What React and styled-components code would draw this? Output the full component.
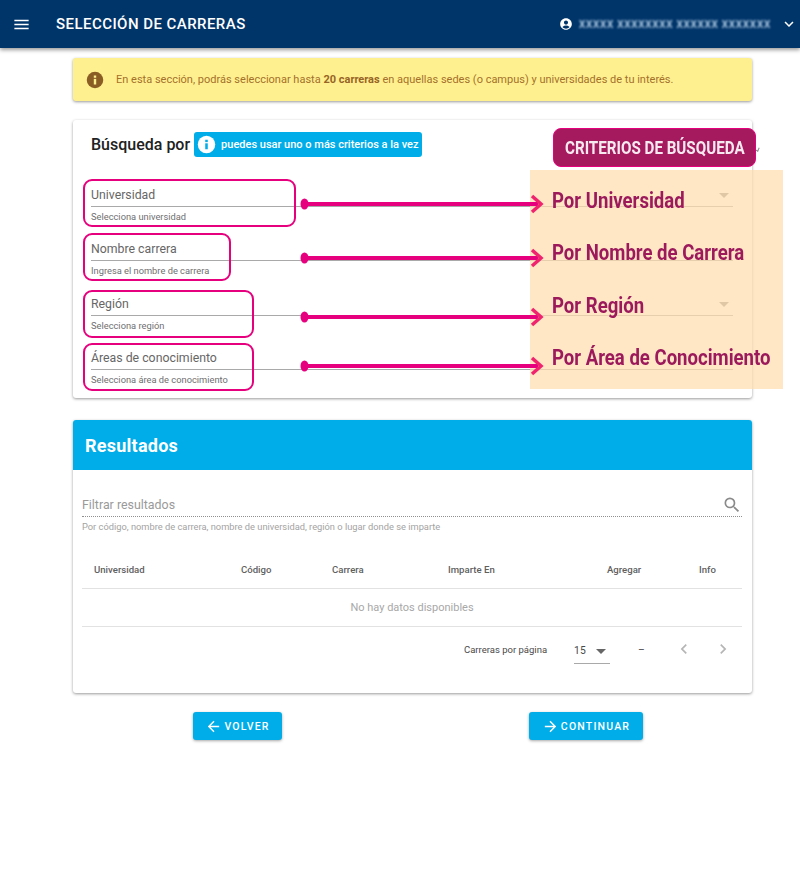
import React from "react";
import styled, { createGlobalStyle } from "styled-components";
import {
  MdMenu,
  MdKeyboardArrowDown,
  MdSearch,
  MdChevronLeft,
  MdChevronRight,
  MdArrowBack,
  MdArrowForward,
  MdAccountCircle,
} from "react-icons/md";

const GlobalStyle = createGlobalStyle`
  html, body { margin: 0; padding: 0; background: #fff; }
  body { font-family: Roboto, "Liberation Sans", sans-serif; width: 800px; min-height: 885px; overflow-x: hidden; }
  * { box-sizing: border-box; }
`;

const TopBar = styled.header`
  height: 48px;
  background: #00356a;
  color: #fff;
  display: flex;
  align-items: center;
  padding: 0 2px 0 12px;
  box-shadow: 0 2px 4px rgba(0, 0, 0, 0.4);
`;

const BarTitle = styled.h1`
  margin: 0 0 0 25px;
  font-size: 15px;
  font-weight: 500;
  letter-spacing: 0.45px;
  flex: 1;
`;

const UserName = styled.span`
  width: 201px;
  margin-left: 6px;
  font-size: 10px;
  font-weight: 500;
  letter-spacing: 0.7px;
  white-space: nowrap;
  color: #c6def2;
  filter: blur(1.2px);
`;

const Main = styled.main`
  padding: 10px 48px 0 73px;
`;

const Alert = styled.div`
  height: 43px;
  background: #fff08f;
  border-radius: 3px;
  box-shadow: 0 1px 3px rgba(0, 0, 0, 0.4);
  display: flex;
  align-items: center;
  padding-left: 13px;
  gap: 12px;
  font-size: 11px;
  color: #a4702b;
  strong { font-weight: 700; color: #976426; }
`;

const Card = styled.section`
  position: relative;
  margin-top: ${(p) => p.$top}px;
  height: ${(p) => p.$height}px;
  background: #fff;
  border-radius: 3px;
  box-shadow: 0 1px 3px rgba(0, 0, 0, 0.4);
`;

const SearchHead = styled.div`
  display: flex;
  align-items: center;
  gap: 4px;
  padding: 12px 0 0 18px;
`;

const SearchTitle = styled.h2`
  margin: 0;
  font-size: 16px;
  font-weight: 500;
  color: #212121;
`;

const Chip = styled.div`
  height: 25px;
  width: 228px;
  background: #00ade8;
  border-radius: 3px;
  color: #fff;
  font-size: 11px;
  font-weight: 500;
  display: flex;
  align-items: center;
  padding-left: 3px;
  gap: 5px;
  white-space: nowrap;
`;

const Fields = styled.div`
  margin: 26px 19px 0 18px;
  display: flex;
  flex-direction: column;
  gap: 9.33px;
`;

const Field = styled.div`
  height: 45px;
  position: relative;
`;

const FieldLabel = styled.div`
  height: 24px;
  padding-top: 5px;
  font-size: 12.3px;
  color: #666;
  border-bottom: 1px solid #a9a9a9;
`;

const FieldHint = styled.div`
  margin-top: 4px;
  font-size: 9.3px;
  color: #6f6f6f;
`;

const Caret = styled.i`
  position: absolute;
  right: 4px;
  top: 10px;
  border-left: 5px solid transparent;
  border-right: 5px solid transparent;
  border-top: 5px solid #8c8c8c;
`;

const Highlight = styled.div`
  position: absolute;
  left: 10px;
  top: ${(p) => p.$top}px;
  width: ${(p) => p.$width}px;
  height: ${(p) => p.$height}px;
  border: 2px solid #e6007e;
  border-radius: 9px;
`;

const Connectors = styled.svg`
  position: absolute;
  left: 0;
  top: 0;
  z-index: 3;
  overflow: visible;
`;

const Panel = styled.div`
  position: absolute;
  left: 457px;
  top: 50px;
  width: 253px;
  height: 219px;
  background: rgba(255, 222, 176, 0.72);
  z-index: 2;
`;

const Criteria = styled.div`
  position: absolute;
  left: 480px;
  top: 8px;
  width: 203px;
  height: 39px;
  z-index: 4;
  background: #a5195e;
  border: 1px solid #e6007e;
  border-radius: 8px;
  color: #f6eaf0;
  display: flex;
  align-items: center;
  padding-left: 11px;
  font-weight: 700;
  font-size: 18.5px;
  white-space: nowrap;
  span {
    display: inline-block;
    transform: scaleX(0.82);
    transform-origin: left center;
  }
`;

const CriteriaItem = styled.div`
  position: absolute;
  left: 479px;
  top: ${(p) => p.$top}px;
  z-index: 4;
  color: #9c1a5c;
  font-weight: 700;
  font-size: 22.5px;
  line-height: 26px;
  white-space: nowrap;
  transform: scaleX(0.825);
  transform-origin: left center;
`;

const Tick = styled.i`
  position: absolute;
  left: 682px;
  top: 27px;
  width: 4px;
  height: 4px;
  border-right: 1px solid #8c8c8c;
  border-bottom: 1px solid #8c8c8c;
  transform: rotate(25deg);
`;

const ResultsHead = styled.div`
  height: 50px;
  background: #00ade8;
  border-radius: 3px 3px 0 0;
  color: #fff;
  font-size: 18px;
  font-weight: 700;
  letter-spacing: 0.25px;
  display: flex;
  align-items: center;
  padding-left: 12px;
`;

const ResultsBody = styled.div`
  padding: 25px 10px 0 9px;
`;

const FilterRow = styled.div`
  height: 22px;
  display: flex;
  align-items: center;
  justify-content: space-between;
  padding-bottom: 2px;
  border-bottom: 1px dotted #8f8f8f;
  font-size: 12.4px;
  color: #9a9a9a;
`;

const FilterHint = styled.div`
  margin-top: 4px;
  font-size: 9.3px;
  color: #a3a3a3;
`;

const TableHead = styled.div`
  margin-top: 20px;
  height: 37px;
  display: grid;
  grid-template-columns: 147px 91px 116px 159px 92px 56px;
  padding: 0 0 2px 12px;
  align-items: center;
  font-size: 9.6px;
  font-weight: 500;
  color: #5f5f5f;
  border-bottom: 1px solid #e2e2e2;
`;

const EmptyRow = styled.div`
  height: 38px;
  display: flex;
  align-items: center;
  justify-content: center;
  font-size: 11px;
  color: #a8a8a8;
  border-bottom: 1px solid #e2e2e2;
`;

const Pager = styled.div`
  height: 44px;
  display: flex;
  align-items: center;
  padding-left: 382px;
  font-size: 9.5px;
  color: #4a4a4a;
`;

const PageSize = styled.div`
  position: relative;
  margin-left: 27px;
  width: 36px;
  height: 26px;
  display: flex;
  align-items: center;
  border-bottom: 1px solid #a9a9a9;
  margin-top: 3px;
  font-size: 10.3px;
  i {
    position: absolute;
    right: 4px;
    top: 11px;
    border-left: 5px solid transparent;
    border-right: 5px solid transparent;
    border-top: 5px solid #666;
  }
`;

const PageDash = styled.span`
  margin-left: 28px;
  width: 36px;
  font-size: 10.3px;
`;

const PageArrow = styled.span`
  display: flex;
  color: #b5b5b5;
  margin-left: ${(p) => p.$gap}px;
`;

const Actions = styled.div`
  display: flex;
  justify-content: space-between;
  padding: 19px 109px 0 120px;
`;

const ActionButton = styled.button`
  height: 28px;
  width: ${(p) => p.$width}px;
  background: #00ade8;
  border: 0;
  border-radius: 3px;
  box-shadow: 0 1px 3px rgba(0, 0, 0, 0.35);
  color: #fff;
  font-family: inherit;
  font-size: 10.5px;
  font-weight: 500;
  letter-spacing: 1.2px;
  display: flex;
  align-items: center;
  justify-content: center;
  gap: 2px;
`;

const fields = [
  { label: "Universidad", hint: "Selecciona universidad", caret: true },
  { label: "Nombre carrera", hint: "Ingresa el nombre de carrera" },
  { label: "Región", hint: "Selecciona región", caret: true },
  { label: "Áreas de conocimiento", hint: "Selecciona área de conocimiento" },
];

const boxes = [
  { top: 59, width: 213, height: 48 },
  { top: 113, width: 148, height: 48 },
  { top: 170, width: 171, height: 48 },
  { top: 223, width: 171, height: 48 },
];

const criteria = [
  { text: "Por Universidad", top: 67 },
  { text: "Por Nombre de Carrera", top: 119 },
  { text: "Por Región", top: 172 },
  { text: "Por Área de Conocimiento", top: 224 },
];

const arrowRows = [84, 138, 197, 246];

function InfoIcon({ size, bg, fg }) {
  return (
    <svg width={size} height={size} viewBox="0 0 24 24" style={{ flexShrink: 0 }}>
      <circle cx="12" cy="12" r="11" fill={bg} />
      <rect x="10.4" y="10.5" width="3.2" height="7.5" fill={fg} />
      <rect x="10.4" y="6" width="3.2" height="3" fill={fg} />
    </svg>
  );
}

export default function App() {
  return (
    <>
      <GlobalStyle />
      <TopBar>
        <MdMenu size={19} />
        <BarTitle>SELECCIÓN DE CARRERAS</BarTitle>
        <MdAccountCircle size={14} />
        <UserName>XXXXX XXXXXXXX XXXXXX XXXXXXX</UserName>
        <MdKeyboardArrowDown size={18} />
      </TopBar>
      <Main>
        <Alert>
          <InfoIcon size={18} bg="#8a5d25" fg="#fff08f" />
          <span>
            En esta sección, podrás seleccionar hasta <strong>20 carreras</strong> en aquellas sedes (o campus) y universidades de tu interés.
          </span>
        </Alert>

        <Card $top={19} $height={278}>
          <SearchHead>
            <SearchTitle>Búsqueda por</SearchTitle>
            <Chip>
              <InfoIcon size={19} bg="#fff" fg="#00ade8" />
              puedes usar uno o más criterios a la vez
            </Chip>
          </SearchHead>
          <Fields>
            {fields.map((f) => (
              <Field key={f.label}>
                <FieldLabel>{f.label}</FieldLabel>
                {f.caret && <Caret />}
                <FieldHint>{f.hint}</FieldHint>
              </Field>
            ))}
          </Fields>

          {boxes.map((b) => (
            <Highlight key={b.top} $top={b.top} $width={b.width} $height={b.height} />
          ))}
          <Panel />
          <Connectors width="679" height="278">
            {arrowRows.map((y) => (
              <g key={y}>
                <ellipse cx="231.500" cy={y} rx="4" ry="5.500" fill="#e6007e" />
                <line x1="232" y1={y} x2="465" y2={y} stroke="#e6007e" strokeWidth="4" />
                <path d={`M459 ${y - 8} L468 ${y} L459 ${y + 8}`} fill="none" stroke="#f0246e" strokeWidth="3.500" />
              </g>
            ))}
          </Connectors>
          <Tick />
          <Criteria><span>CRITERIOS DE BÚSQUEDA</span></Criteria>
          {criteria.map((c) => (
            <CriteriaItem key={c.text} $top={c.top}>{c.text}</CriteriaItem>
          ))}
        </Card>

        <Card $top={22} $height={273}>
          <ResultsHead>Resultados</ResultsHead>
          <ResultsBody>
            <FilterRow>
              Filtrar resultados
              <MdSearch size={20} color="#8a8a8a" />
            </FilterRow>
            <FilterHint>Por código, nombre de carrera, nombre de universidad, región o lugar donde se imparte</FilterHint>
            <TableHead>
              <span>Universidad</span>
              <span>Código</span>
              <span>Carrera</span>
              <span>Imparte En</span>
              <span>Agregar</span>
              <span>Info</span>
            </TableHead>
            <EmptyRow>No hay datos disponibles</EmptyRow>
            <Pager>
              <span>Carreras por página</span>
              <PageSize>15<i /></PageSize>
              <PageDash>–</PageDash>
              <PageArrow $gap={0}><MdChevronLeft size={20} /></PageArrow>
              <PageArrow $gap={19}><MdChevronRight size={20} /></PageArrow>
            </Pager>
          </ResultsBody>
        </Card>

        <Actions>
          <ActionButton $width={89}>
            <MdArrowBack size={17} />
            VOLVER
          </ActionButton>
          <ActionButton $width={114}>
            <MdArrowForward size={17} />
            CONTINUAR
          </ActionButton>
        </Actions>
      </Main>
    </>
  );
}
